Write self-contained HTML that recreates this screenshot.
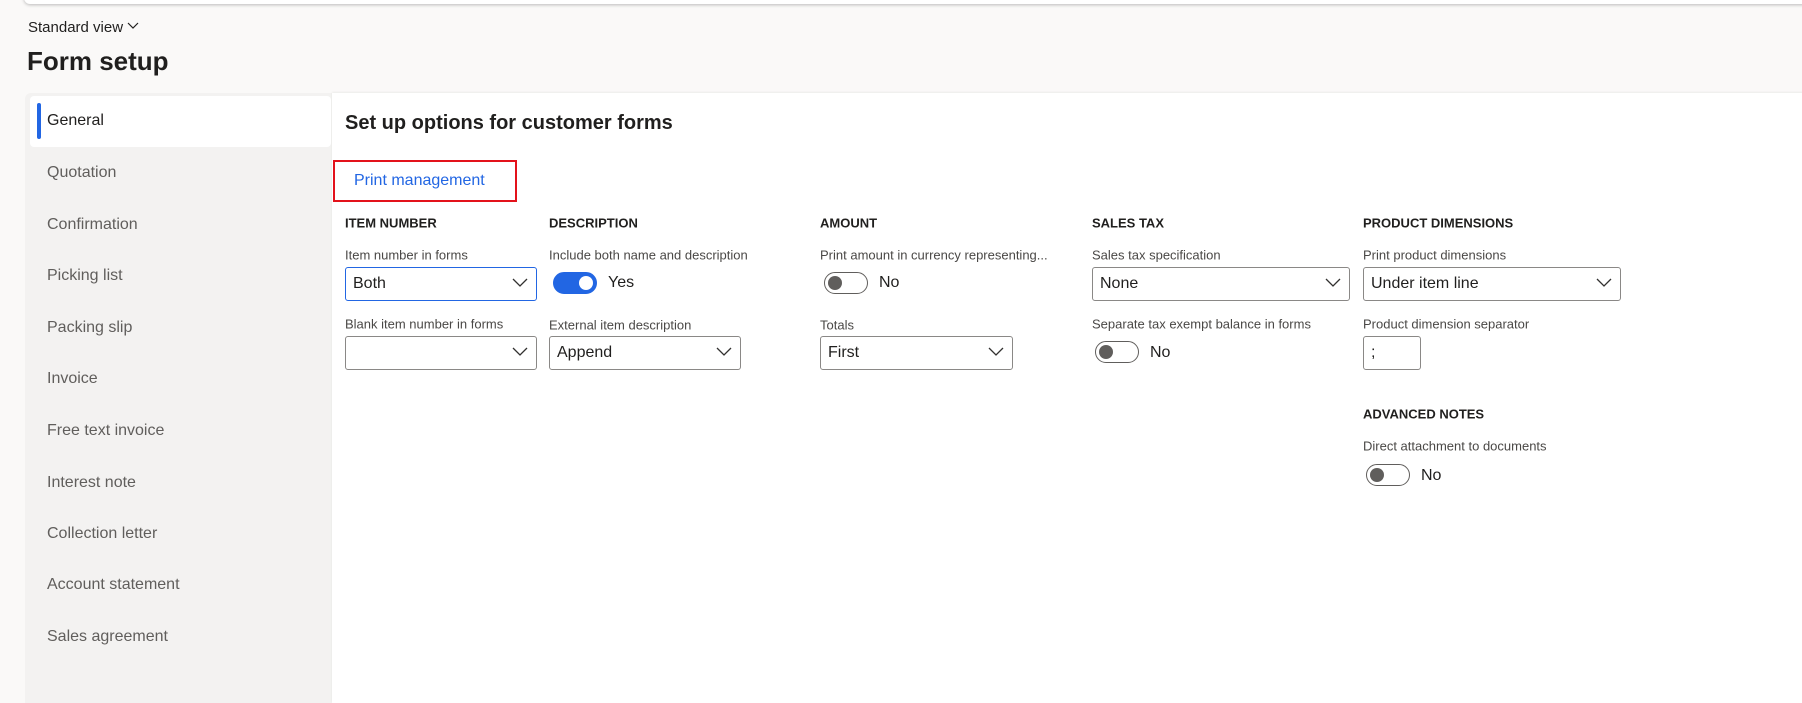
<!DOCTYPE html>
<html><head><meta charset="utf-8"><style>
*{box-sizing:border-box;margin:0;padding:0}
body{width:1802px;height:696px;overflow:hidden;background:#faf9f8;font-family:"Liberation Sans",sans-serif;position:relative;color:#323130}
.a{position:absolute;white-space:nowrap}
.topbar{left:24px;top:-10px;width:1800px;height:14px;background:#fff;border-radius:6px;box-shadow:0 1px 3px rgba(0,0,0,.25)}
.side{left:25px;top:93px;width:307px;height:610px;background:#f3f2f1;border-radius:6px 0 0 0}
.main{left:332px;top:93px;width:1480px;height:610px;background:#fff;box-shadow:0 -1px 2px rgba(0,0,0,.06)}
.nav{left:47px;font-size:16px;color:#605e5c;transform:translateY(-50%)}
.sh{font-size:13px;font-weight:bold;color:#201f1e;transform:translateY(-50%)}
.lb{font-size:13px;color:#4a4846;transform:translateY(-50%)}
.dd{height:34px;border:1px solid #8a8886;border-radius:3px;font-size:16px;color:#201f1e;padding:7px 7px;background:#fff}
.dd svg{position:absolute;right:8px;top:10px}
.tg{width:44px;height:22px;border:1px solid #605e5c;border-radius:11px;background:#fff}
.tg::after{content:"";position:absolute;left:3px;top:3px;width:14px;height:14px;border-radius:50%;background:#605e5c}
.tg.on{background:#2266e3;border-color:#2266e3}
.tg.on::after{left:25px;background:#fff}
.tv{font-size:16px;color:#201f1e;transform:translateY(-50%)}
</style></head><body>
<div class="a topbar"></div>
<div class="a" style="left:28px;top:19px;font-size:15px;color:#201f1e">Standard view <svg width="12" height="8" viewBox="0 0 12 8" style="vertical-align:2px"><path d="M1 1l5 5 5-5" stroke="#201f1e" fill="none" stroke-width="1.2"/></svg></div>
<div class="a" style="left:27px;top:46px;font-size:26px;font-weight:bold;color:#201f1e">Form setup</div>
<div class="a side"></div>
<div class="a main"></div>
<div class="a" style="left:30px;top:96px;width:301px;height:51px;background:#fff;border-radius:4px"></div>
<div class="a" style="left:37px;top:103px;width:4px;height:36px;background:#2266e3;border-radius:2px"></div>
<div class="a nav" style="top:121px;color:#201f1e">General</div>
<div class="a nav" style="top:173px">Quotation</div>
<div class="a nav" style="top:225px">Confirmation</div>
<div class="a nav" style="top:276px">Picking list</div>
<div class="a nav" style="top:328px">Packing slip</div>
<div class="a nav" style="top:379px">Invoice</div>
<div class="a nav" style="top:431px">Free text invoice</div>
<div class="a nav" style="top:483px">Interest note</div>
<div class="a nav" style="top:534px">Collection letter</div>
<div class="a nav" style="top:585px">Account statement</div>
<div class="a nav" style="top:637px">Sales agreement</div>

<div class="a" style="left:345px;top:112px;font-size:20px;font-weight:bold;color:#201f1e">Set up options for customer forms</div>
<div class="a" style="left:333px;top:160px;width:184px;height:42px;border:2px solid #e3121b"></div>
<div class="a" style="left:354px;top:172px;font-size:16px;color:#2266e3">Print management</div>

<div class="a sh" style="left:345px;top:223px">ITEM NUMBER</div>
<div class="a sh" style="left:549px;top:223px">DESCRIPTION</div>
<div class="a sh" style="left:820px;top:223px">AMOUNT</div>
<div class="a sh" style="left:1092px;top:223px">SALES TAX</div>
<div class="a sh" style="left:1363px;top:223px">PRODUCT DIMENSIONS</div>

<div class="a lb" style="left:345px;top:255px">Item number in forms</div>
<div class="a lb" style="left:549px;top:255px">Include both name and description</div>
<div class="a lb" style="left:820px;top:255px">Print amount in currency representing...</div>
<div class="a lb" style="left:1092px;top:255px">Sales tax specification</div>
<div class="a lb" style="left:1363px;top:255px">Print product dimensions</div>

<div class="a dd" style="left:345px;top:267px;width:192px;border-color:#2266e3">Both<svg width="16" height="10" viewBox="0 0 16 10"><path d="M1 1l7 7 7-7" stroke="#323130" fill="none" stroke-width="1.3"/></svg></div>
<div class="a tg on" style="left:553px;top:272px"></div>
<div class="a tv" style="left:608px;top:283px">Yes</div>
<div class="a tg" style="left:824px;top:272px"></div>
<div class="a tv" style="left:879px;top:283px">No</div>
<div class="a dd" style="left:1092px;top:267px;width:258px">None<svg width="16" height="10" viewBox="0 0 16 10"><path d="M1 1l7 7 7-7" stroke="#323130" fill="none" stroke-width="1.3"/></svg></div>
<div class="a dd" style="left:1363px;top:267px;width:258px">Under item line<svg width="16" height="10" viewBox="0 0 16 10"><path d="M1 1l7 7 7-7" stroke="#323130" fill="none" stroke-width="1.3"/></svg></div>

<div class="a lb" style="left:345px;top:324px">Blank item number in forms</div>
<div class="a lb" style="left:549px;top:325px">External item description</div>
<div class="a lb" style="left:820px;top:325px">Totals</div>
<div class="a lb" style="left:1092px;top:324px">Separate tax exempt balance in forms</div>
<div class="a lb" style="left:1363px;top:324px">Product dimension separator</div>

<div class="a dd" style="left:345px;top:336px;width:192px"><svg width="16" height="10" viewBox="0 0 16 10"><path d="M1 1l7 7 7-7" stroke="#323130" fill="none" stroke-width="1.3"/></svg></div>
<div class="a dd" style="left:549px;top:336px;width:192px">Append<svg width="16" height="10" viewBox="0 0 16 10"><path d="M1 1l7 7 7-7" stroke="#323130" fill="none" stroke-width="1.3"/></svg></div>
<div class="a dd" style="left:820px;top:336px;width:193px">First<svg width="16" height="10" viewBox="0 0 16 10"><path d="M1 1l7 7 7-7" stroke="#323130" fill="none" stroke-width="1.3"/></svg></div>
<div class="a tg" style="left:1095px;top:341px"></div>
<div class="a tv" style="left:1150px;top:353px">No</div>
<div class="a dd" style="left:1363px;top:336px;width:58px">;</div>

<div class="a sh" style="left:1363px;top:414px">ADVANCED NOTES</div>
<div class="a lb" style="left:1363px;top:446px">Direct attachment to documents</div>
<div class="a tg" style="left:1366px;top:464px"></div>
<div class="a tv" style="left:1421px;top:476px">No</div>
</body></html>
